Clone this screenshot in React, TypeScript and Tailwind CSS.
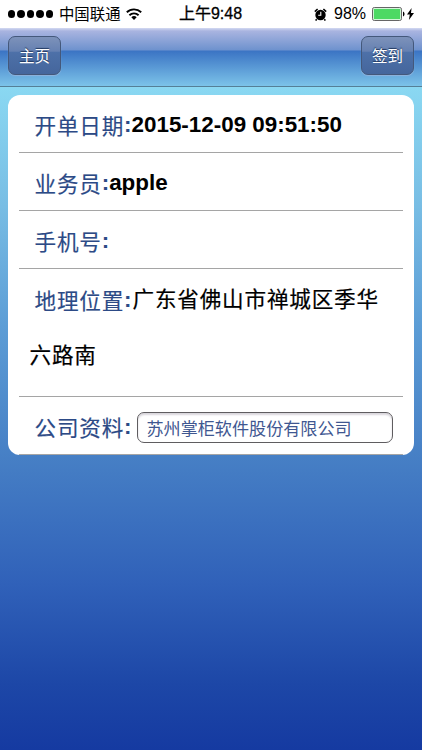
import type { ReactNode } from "react";

interface Row {
  label: string;
  value: string;
}

const ROWS: Row[] = [
  { label: "开单日期", value: "2015-12-09 09:51:50" },
  { label: "业务员", value: "apple" },
  { label: "手机号", value: "" },
];

export default function App() {
  return (
    <div className="flex flex-col w-[422px] h-[750px] overflow-hidden bg-white font-['Liberation_Sans','Noto_Sans_CJK_SC',sans-serif]">
      <StatusBar />
      <header className="flex justify-between items-start h-[59px] shrink-0 px-2 pt-[8px] border-b border-[#557f96] bg-[linear-gradient(180deg,#d4daf2_0px,#a9b4e0_3px,#6e92ce_22px,#3b74c4_23px,#7cc3e9_58px)]">
        <HeaderButton>主页</HeaderButton>
        <HeaderButton>签到</HeaderButton>
      </header>
      <main className="flex-1 px-2 pt-2 bg-[linear-gradient(180deg,#8ad8f2_0%,#78bde4_18%,#5c9dd6_36%,#467fc5_56%,#3061b9_75%,#1d47a7_90%,#153aa1_100%)]">
        <section className="h-[360px] rounded-xl bg-white overflow-hidden pl-[10.5px] pr-[11px]">
          {ROWS.map((r) => (
            <div key={r.label} className="h-[58px] border-b border-[#a5a5a5] pl-4 pt-[3px] flex items-center text-[22.4px] leading-none whitespace-nowrap">
              <Label text={r.label} />
              <span className="font-bold text-black">{r.value}</span>
            </div>
          ))}
          <div className="h-[128px] border-b border-[#a5a5a5] pl-[11px] pt-[3px] text-[22.4px]">
            <p className="h-14 pl-[5px] flex items-center leading-none whitespace-nowrap">
              <Label text="地理位置" />
              <span className="pl-px text-[21.6px] tracking-[0.8px] text-black [-webkit-text-stroke:0.2px_black]">广东省佛山市禅城区季华</span>
            </p>
            <p className="h-14 flex items-center text-[21.6px] leading-none tracking-[0.8px] text-black [-webkit-text-stroke:0.2px_black]">六路南</p>
          </div>
          <div className="h-[58px] border-b border-[#a5a5a5] pl-4 pt-[4px] flex items-center text-[22.4px] leading-none">
            <div className="w-[102px] shrink-0">
              <Label text="公司资料" />
            </div>
            <input
              readOnly
              value="苏州掌柜软件股份有限公司"
              className="w-[256px] h-[31px] shrink-0 rounded-[7px] border-[1.5px] border-[#5f5d60] bg-white pl-[9px] text-[17.1px] text-[#3f5791] outline-none shadow-[inset_0_2px_2px_#d9d6dc]"
            />
          </div>
        </section>
      </main>
    </div>
  );
}

function Label({ text }: { text: string }) {
  return (
    <span className="flex items-center text-[#2c4a86]">
      <span className="pt-[3px] text-[21.6px] tracking-[0.8px] [-webkit-text-stroke:0.15px_#2c4a86]">{text}</span>
      <b>:</b>
    </span>
  );
}

function HeaderButton({ children }: { children: ReactNode }) {
  return (
    <button
      type="button"
      className="w-[53px] h-[39px] rounded-[7px] border-[1.5px] border-[#44587b] bg-[linear-gradient(180deg,#7d92ba_0%,#6681b2_38%,#4d70a8_42%,#45669c_100%)] text-white text-[15.5px] leading-none pt-[3px] [text-shadow:0_-1px_1px_#1e355c] shadow-[0_1px_1px_#8fb2dc]"
    >
      {children}
    </button>
  );
}

/* iOS status bar */
function StatusBar() {
  return (
    <div className="h-7 shrink-0 flex items-center pl-[8px] pr-[8px] text-black text-[16px] leading-none">
      <div className="flex gap-[2px]">
        {[0, 1, 2, 3, 4].map((i) => (
          <span key={i} className="w-[7.4px] h-[7.4px] rounded-full bg-black" />
        ))}
      </div>
      <span className="ml-[6px] pt-[1px] w-[63px] text-[15.4px] whitespace-nowrap">中国联通</span>
      <svg className="ml-[4px] w-4 h-3" viewBox="0 0 16 12" fill="none" stroke="black" strokeWidth="1.9">
        <path d="M.8 4.2a10.5 10.5 0 0 1 14.4 0" />
        <path d="M3.4 7.2a6.6 6.6 0 0 1 9.2 0" />
        <path d="M8 12 5.3 9.2a4 4 0 0 1 5.4 0Z" fill="black" stroke="none" />
      </svg>
      <span className="ml-[37px] w-[64px] text-[16px] whitespace-nowrap [-webkit-text-stroke:0.3px_black]">上午9:48</span>
      <svg className="ml-auto w-[13px] h-[13px]" viewBox="0 0 13 13">
        <circle cx="6.5" cy="7" r="5.2" />
        <path d="M.8 3.6 3.6 1M12.2 3.6 9.4 1M2.7 11.3 1.6 12.6M10.3 11.3l1.1 1.3" stroke="black" strokeWidth="1.5" />
        <path d="M6.8 3.7v3.6H4.2" stroke="white" strokeWidth="1.1" fill="none" />
      </svg>
      <span className="ml-[7px] w-[34px] text-[16px] whitespace-nowrap">98%</span>
      <svg className="ml-[4px] w-[33px] h-[14px]" viewBox="0 0 33 14">
        <rect x=".5" y=".5" width="29" height="13" rx="1.8" fill="white" stroke="#555" strokeWidth=".9" />
        <rect x="1.7" y="1.7" width="26.6" height="10.6" rx=".6" fill="#4cd964" />
        <path d="M31 4.5c2 .8 2 4.2 0 5Z" />
      </svg>
      <svg className="ml-[2px] w-[7px] h-[12px]" viewBox="0 0 7 12">
        <path d="M4.6 0 0 6.6h2.8L1.9 12 7 4.9H4Z" />
      </svg>
    </div>
  );
}
